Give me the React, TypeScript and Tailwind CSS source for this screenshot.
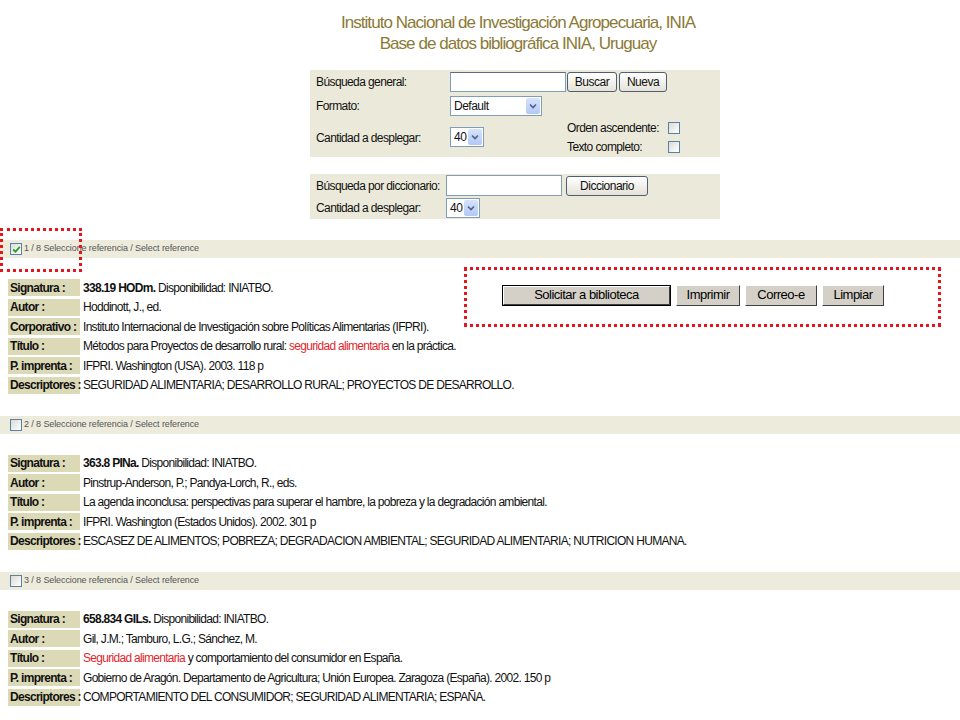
import React from "react";

const font = "font-['Liberation_Sans',Arial,sans-serif]";

type Row = { label: string; value: React.ReactNode };

const red = (t: string) => <span className="text-[#e3262c]">{t}</span>;

const records: { n: number; checked: boolean; rows: Row[] }[] = [
  {
    n: 1,
    checked: true,
    rows: [
      { label: "Signatura :", value: <><b>338.19 HODm.</b> Disponibilidad: INIATBO.</> },
      { label: "Autor :", value: "Hoddinott, J., ed." },
      { label: "Corporativo :", value: "Instituto Internacional de Investigación sobre Políticas Alimentarias (IFPRI)." },
      { label: "Título :", value: <>Métodos para Proyectos de desarrollo rural: {red("seguridad alimentaria")} en la práctica.</> },
      { label: "P. imprenta :", value: "IFPRI. Washington (USA). 2003. 118 p" },
      { label: "Descriptores :", value: "SEGURIDAD ALIMENTARIA; DESARROLLO RURAL; PROYECTOS DE DESARROLLO." },
    ],
  },
  {
    n: 2,
    checked: false,
    rows: [
      { label: "Signatura :", value: <><b>363.8 PINa.</b> Disponibilidad: INIATBO.</> },
      { label: "Autor :", value: "Pinstrup-Anderson, P.; Pandya-Lorch, R., eds." },
      { label: "Título :", value: "La agenda inconclusa: perspectivas para superar el hambre, la pobreza y la degradación ambiental." },
      { label: "P. imprenta :", value: "IFPRI. Washington (Estados Unidos). 2002. 301 p" },
      { label: "Descriptores :", value: "ESCASEZ DE ALIMENTOS; POBREZA; DEGRADACION AMBIENTAL; SEGURIDAD ALIMENTARIA; NUTRICION HUMANA." },
    ],
  },
  {
    n: 3,
    checked: false,
    rows: [
      { label: "Signatura :", value: <><b>658.834 GILs.</b> Disponibilidad: INIATBO.</> },
      { label: "Autor :", value: "Gil, J.M.; Tamburo, L.G.; Sánchez, M." },
      { label: "Título :", value: <>{red("Seguridad alimentaria")} y comportamiento del consumidor en España.</> },
      { label: "P. imprenta :", value: "Gobierno de Aragón. Departamento de Agricultura; Unión Europea. Zaragoza (España). 2002. 150 p" },
      { label: "Descriptores :", value: "COMPORTAMIENTO DEL CONSUMIDOR; SEGURIDAD ALIMENTARIA; ESPAÑA." },
    ],
  },
];

function XpButton({ children, className = "" }: { children: React.ReactNode; className?: string }) {
  return (
    <div
      className={`h-[20px] flex items-center justify-center rounded-[3px] border border-[#4f5f70] bg-gradient-to-b from-white to-[#e4e2d8] text-[12px] tracking-[-0.5px] text-[#111] ${className}`}
    >
      {children}
    </div>
  );
}

function XpSelect({ value, w }: { value: string; w: string }) {
  return (
    <div className={`${w} h-[20px] flex items-center justify-between border border-[#7f9db9] bg-white pl-[3px] pr-[1px]`}>
      <span className="text-[12px] tracking-[-0.5px] text-[#111]">{value}</span>
      <div className="w-[14px] h-[16px] rounded-[2px] bg-gradient-to-b from-[#d6e3fc] to-[#b4c8f5] flex items-center justify-center">
        <svg width="8" height="6" viewBox="0 0 8 6">
          <path d="M1 1.5 L4 4.5 L7 1.5" stroke="#4d6185" strokeWidth="1.6" fill="none" />
        </svg>
      </div>
    </div>
  );
}

function XpCheck({ checked = false }: { checked?: boolean }) {
  return (
    <div className="w-[12px] h-[12px] border border-[#5a7fa8] bg-gradient-to-br from-[#dcdcd4] to-white flex items-center justify-center">
      {checked && (
        <svg width="9" height="9" viewBox="0 0 9 9">
          <path d="M1.2 4.5 L3.5 6.8 L7.8 1.8" stroke="#21a121" strokeWidth="1.8" fill="none" />
        </svg>
      )}
    </div>
  );
}

function ClassicButton({ children, w, isDefault = false }: { children: React.ReactNode; w: string; isDefault?: boolean }) {
  return (
    <div className={`${w} h-[21px] ${isDefault ? "border border-black" : ""}`}>
      <div className="h-full flex items-center justify-center bg-[#d4d0c8] border border-t-white border-l-white border-r-[#404040] border-b-[#404040] text-[13px] tracking-[-0.5px] text-black">
        {children}
      </div>
    </div>
  );
}

function RefBar({ n, checked }: { n: number; checked: boolean }) {
  return (
    <div className="h-[18px] bg-[#ecebdc] flex items-center pl-[10px] gap-[2px]">
      <XpCheck checked={checked} />
      <span className="text-[9px] text-[#555] tracking-[-0.1px]">{n} / 8 Seleccione referencia / Select reference</span>
    </div>
  );
}

function Record({ rec }: { rec: (typeof records)[number] }) {
  return (
    <div className="grid grid-cols-[72px_416px_1fr] gap-x-[3px] gap-y-[2.5px] ml-[8px] mt-[21px] mb-[22px]">
      {rec.rows.map((r, i) => (
        <React.Fragment key={r.label}>
          <div className="h-[17px] bg-[#dcd9b7] pl-[2px] flex items-center text-[12px] font-bold tracking-[-0.7px] text-[#111] whitespace-nowrap">
            {r.label}
          </div>
          <div
            className={`h-[17px] flex items-center text-[12px] tracking-[-0.7px] text-[#111] whitespace-nowrap ${
              rec.n === 1 && i < 2 ? "" : "col-span-2"
            }`}
          >
            <span>{r.value}</span>
          </div>
          {rec.n === 1 && i === 0 && (
            <div className="row-span-2 flex gap-[5px] pt-[5.5px]">
              <ClassicButton w="w-[169px]" isDefault>
                Solicitar a biblioteca
              </ClassicButton>
              <ClassicButton w="w-[64px]">Imprimir</ClassicButton>
              <ClassicButton w="w-[72px]">Correo-e</ClassicButton>
              <ClassicButton w="w-[62px]">Limpiar</ClassicButton>
            </div>
          )}
        </React.Fragment>
      ))}
    </div>
  );
}

export default function App() {
  return (
    <div className={`relative w-[960px] h-[720px] overflow-hidden bg-white ${font}`}>
      {/* header */}
      <div className="ml-[308px] w-[420px] pt-[12px] text-center text-[17px] leading-[21px] tracking-[-0.95px] text-[#8b7a36]">
        <div>Instituto Nacional de Investigación Agropecuaria, INIA</div>
        <div>Base de datos bibliográfica INIA, Uruguay</div>
      </div>

      {/* busqueda general */}
      <div className="ml-[310px] w-[410px] mt-[16px] bg-[#ebe9d9] pl-[6px] text-[12px] tracking-[-0.6px] text-[#111]">
        <div className="h-[24px] flex items-center">
          <div className="w-[134px]">Búsqueda general:</div>
          <div className="w-[116px] h-[20px] border border-[#7f9db9] border-t-[#5c6c7c] bg-white" />
          <XpButton className="w-[50px] ml-[1px]">Buscar</XpButton>
          <XpButton className="w-[48px] ml-[2px]">Nueva</XpButton>
        </div>
        <div className="h-[24px] flex items-center">
          <div className="w-[134px]">Formato:</div>
          <XpSelect value="Default" w="w-[92px]" />
        </div>
        <div className="h-[39px] flex">
          <div className="w-[134px] self-center">Cantidad a desplegar:</div>
          <div className="w-[117px] pt-[9px]">
            <XpSelect value="40" w="w-[34px]" />
          </div>
          <div className="flex flex-col">
            <div className="h-[20px] flex items-center">
              <span className="w-[101px]">Orden ascendente:</span>
              <XpCheck />
            </div>
            <div className="h-[20px] flex items-center">
              <span className="w-[101px]">Texto completo:</span>
              <XpCheck />
            </div>
          </div>
        </div>
      </div>

      {/* diccionario */}
      <div className="ml-[310px] w-[410px] mt-[17px] bg-[#ebe9d9] pl-[6px] text-[12px] tracking-[-0.6px] text-[#111]">
        <div className="h-[23px] flex items-center">
          <div className="w-[130px]">Búsqueda por diccionario:</div>
          <div className="w-[116px] h-[21px] border border-[#7f9db9] bg-white" />
          <XpButton className="w-[82px] ml-[4px]">Diccionario</XpButton>
        </div>
        <div className="h-[22px] flex items-center">
          <div className="w-[130px]">Cantidad a desplegar:</div>
          <XpSelect value="40" w="w-[34px]" />
        </div>
      </div>

      {/* resultados */}
      <div className="mt-[21px]">
        {records.map((rec) => (
          <div key={rec.n}>
            <RefBar n={rec.n} checked={rec.checked} />
            <Record rec={rec} />
          </div>
        ))}
      </div>

      {/* anotaciones */}
      <div className="absolute left-[0px] top-[228px] w-[82px] h-[44px] border-[3px] border-dotted border-[#e8141a]" />
      <div className="absolute left-[464px] top-[267px] w-[477px] h-[60px] border-[3px] border-dotted border-[#e8141a]" />
    </div>
  );
}
